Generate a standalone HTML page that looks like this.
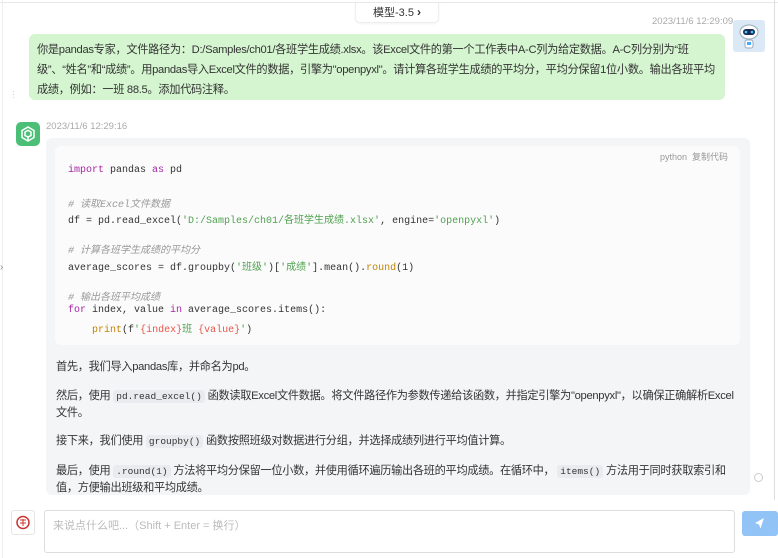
<!DOCTYPE html>
<html><head><meta charset="utf-8"><style>
*{margin:0;padding:0;box-sizing:border-box}
body{width:778px;height:558px;overflow:hidden;background:#fff;font-family:"Liberation Sans","Noto Sans CJK SC",sans-serif;font-size:11.5px;color:#333;position:relative}
.abs{position:absolute}
.top{left:0;top:0;width:778px;height:3px;border-bottom:1px solid #e8e8e8}
.model{left:355px;top:3px;width:84px;height:20px;border:1px solid #eee;border-top:none;border-radius:0 0 5px 5px;background:#fff;text-align:center;font-size:11px;line-height:18px;color:#333;box-shadow:0 1px 2px rgba(0,0,0,.05)}
.ts{font-size:9.5px;color:#aaa}
.user{left:29px;top:34px;width:696px;height:66px;background:#d4f5cf;border-radius:6px;padding:6px 8px;line-height:20px;font-size:11.2px;letter-spacing:-0.3px;color:#333}
.av{left:733px;top:20px;width:32px;height:32px;background:#dbe9f7;border-radius:3px}
.bot{left:16px;top:122px;width:24px;height:24px;background:#4cbf77;border-radius:5px}
.asst{left:46px;top:138px;width:704px;height:357px;background:#f4f5f7;border-radius:6px}
.code{left:55px;top:146px;width:685px;height:199px;background:#fbfbfc;border-radius:6px}
.cl{position:absolute;left:68px;font-family:"Liberation Mono",monospace;font-size:10px;color:#333;white-space:pre}
.cm{color:#999;font-style:italic}
.kw{color:#a626a4}.st{color:#50a14f}.nu{color:#c18401}.rd{color:#e45649}
.p{position:absolute;left:56px;width:684px;font-size:11.2px;letter-spacing:-0.3px;line-height:17px;color:#333}
.ic{font-family:"Liberation Mono",monospace;font-size:9.5px;letter-spacing:0;background:#e9ebee;border-radius:3px;padding:1px 3px}
.input{left:44px;top:510px;width:691px;height:43px;border:1px solid #ddd;border-radius:3px;padding:6px 8px;color:#bbb;font-size:11px}
.send{left:742px;top:511px;width:36px;height:25px;background:#92c3f6;border-radius:3px}
.me{left:11px;top:510px;width:24px;height:25px;border:1px solid #e5e5e5;border-radius:3px;background:#fff}
</style></head><body>
<div class="abs top"></div>
<div class="abs" style="left:2px;top:0;width:1px;height:558px;background:#eee"></div>
<div class="abs" style="left:774px;top:0;width:1px;height:500px;background:#ddd"></div>
<div class="abs model">模型-3.5 <b style="font-size:12px">›</b></div>
<div class="abs ts" style="left:652px;top:16px">2023/11/6 12:29:09</div>
<div class="abs av"><svg width="32" height="32" viewBox="0 0 32 32"><ellipse cx="16" cy="12" rx="9" ry="7" fill="#fff" stroke="#9ab" /><rect x="10" y="9" width="12" height="6" rx="3" fill="#1b2a55"/><circle cx="13" cy="12" r="1.3" fill="#4cf"/><circle cx="19" cy="12" r="1.3" fill="#4cf"/><rect x="12" y="20" width="8" height="8" rx="2" fill="#fff" stroke="#9ab"/><rect x="14" y="22" width="4" height="3" fill="#4af"/></svg></div>
<div class="abs user">你是pandas专家，文件路径为：D:/Samples/ch01/各班学生成绩.xlsx。该Excel文件的第一个工作表中A-C列为给定数据。A-C列分别为“班级”、“姓名”和“成绩”。用pandas导入Excel文件的数据，引擎为"openpyxl"。请计算各班学生成绩的平均分，平均分保留1位小数。输出各班平均成绩，例如：一班 88.5。添加代码注释。</div>
<div class="abs" style="left:12px;top:90px;color:#bbb;font-size:8px;line-height:3px">·<br>·<br>·</div>
<div class="abs bot"><svg width="24" height="24" viewBox="0 0 24 24" fill="none" stroke="#fff" stroke-width="1.5"><path d="M12 5l6 3.5v7L12 19l-6-3.5v-7z"/><path d="M9 10l3-1.7 3 1.7v3.5L12 15l-3-1.5z"/><path d="M12 15v4"/></svg></div>
<div class="abs ts" style="left:46px;top:121px">2023/11/6 12:29:16</div>
<div class="abs asst"></div>
<div class="abs code"></div>
<div class="abs" style="left:660px;top:150px;font-size:9px;color:#999">python&nbsp;&nbsp;复制代码</div>
<div class="cl" style="top:165px"><span class="kw">import</span> pandas <span class="kw">as</span> pd</div>
<div class="cl cm" style="top:195px"># 读取Excel文件数据</div>
<div class="cl" style="top:211px">df = pd.read_excel(<span class="st">'D:/Samples/ch01/各班学生成绩.xlsx'</span>, engine=<span class="st">'openpyxl'</span>)</div>
<div class="cl cm" style="top:241px"># 计算各班学生成绩的平均分</div>
<div class="cl" style="top:258px">average_scores = df.groupby(<span class="st">'班级'</span>)[<span class="st">'成绩'</span>].mean().<span class="nu">round</span>(1)</div>
<div class="cl cm" style="top:288px"># 输出各班平均成绩</div>
<div class="cl" style="top:305px"><span class="kw">for</span> index, value <span class="kw">in</span> average_scores.items():</div>
<div class="cl" style="top:320px">    <span class="nu">print</span>(f<span class="st">'</span><span class="rd">{index}</span><span class="st">班 </span><span class="rd">{value}</span><span class="st">'</span>)</div>
<div class="p" style="top:359px">首先，我们导入pandas库，并命名为pd。</div>
<div class="p" style="top:388px">然后，使用 <span class="ic">pd.read_excel()</span> 函数读取Excel文件数据。将文件路径作为参数传递给该函数，并指定引擎为"openpyxl"，以确保正确解析Excel文件。</div>
<div class="p" style="top:433px">接下来，我们使用 <span class="ic">groupby()</span> 函数按照班级对数据进行分组，并选择成绩列进行平均值计算。</div>
<div class="p" style="top:463px">最后，使用 <span class="ic">.round(1)</span> 方法将平均分保留一位小数，并使用循环遍历输出各班的平均成绩。在循环中， <span class="ic">items()</span> 方法用于同时获取索引和值，方便输出班级和平均成绩。</div>
<div class="abs" style="left:0;top:262px;color:#888;font-size:10px">›</div>
<div class="abs" style="left:754px;top:473px;width:9px;height:9px;border:1px solid #ccc;border-radius:50%"></div>
<div class="abs me"><svg width="22" height="23" viewBox="0 0 22 23"><circle cx="11" cy="11.5" r="6" fill="none" stroke="#c33" stroke-width="1.5"/><path d="M8 9h6M8 12h6M11 8v7" stroke="#c33" stroke-width="1"/></svg></div>
<div class="abs input">来说点什么吧...（Shift + Enter = 换行）</div>
<div class="abs send"><svg width="36" height="25" viewBox="0 0 36 25"><path d="M22 7L13 12l4 1.5 1.5 4z" fill="#fff"/></svg></div>
</body></html>
